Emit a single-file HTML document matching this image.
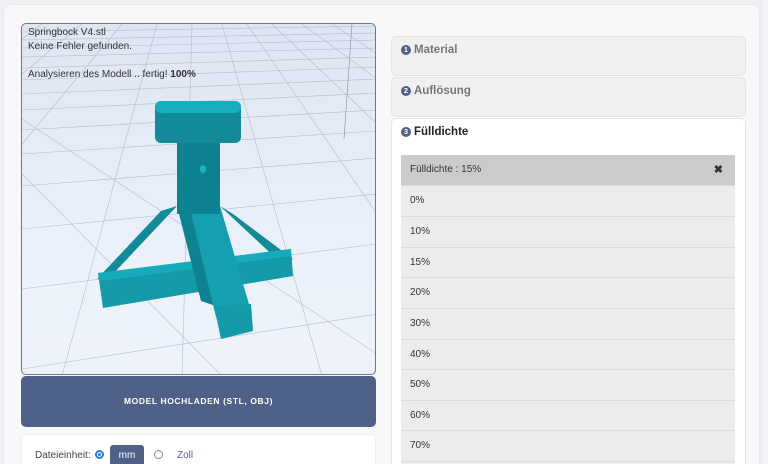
<!DOCTYPE html>
<html style="width:768px;height:464px;overflow:hidden"><head><meta charset="utf-8"><style>
*{box-sizing:border-box;margin:0;padding:0}
body{width:768px;height:464px;overflow:hidden;background:#eef0f3;font-family:"Liberation Sans",sans-serif;position:relative}
.card{position:absolute;left:3px;top:4px;width:757px;height:460px;background:#f7f8fa;border-radius:8px 8px 0 0;border:1px solid #e6e8ec;border-bottom:none}
.strip{position:absolute;left:761px;top:0;width:7px;height:464px;background:#f3f5f8;border-left:1px solid #e3e6ea}
.viewer{position:absolute;left:21px;top:23px;width:355px;height:352px;border:1px solid #777;border-radius:5px;overflow:hidden;background:linear-gradient(180deg,#dfe6f3,#eaf0fa 60%,#eef3fb)}
.vt{position:absolute;left:6px;font-size:10px;color:#333}
.btn{position:absolute;left:21px;top:376px;width:355px;height:51px;background:#4f6089;border-radius:5px;color:#fff;font-size:8.5px;font-weight:bold;letter-spacing:.6px;text-align:center;line-height:51px}
.opt{position:absolute;left:21px;top:434px;width:355px;height:30px;background:#fff;border-radius:5px 5px 0 0;border:1px solid #eceef1;border-bottom:none}
.acc{position:absolute;left:391px;width:355px;border:1px solid #e4e4e4;border-radius:5px;background:#f0f0f0}
.acc h3{position:absolute;left:9px;top:7px;font-size:11.5px;font-weight:bold;color:#777;display:flex;align-items:center}
.num{display:inline-block;width:10px;height:10px;border-radius:50%;background:#4f6089;color:#fff;font-size:7.5px;line-height:10px;text-align:center;margin-right:3px}
.row{position:absolute;left:401px;width:334px;height:31px;background:#ececec;border-top:1px solid #dcdcdc;font-size:10px;color:#333;padding-left:9px;line-height:30px}
</style></head><body>
<div class="card"></div>
<div class="strip"></div>
<div class="viewer">
<svg width="355" height="352" style="position:absolute;left:0;top:0" stroke="#b4bdcc" stroke-width="0.6" fill="none">
<line x1="0" y1="8" x2="355" y2="2"/><line x1="0" y1="16" x2="355" y2="9"/><line x1="0" y1="24" x2="355" y2="16"/><line x1="0" y1="33" x2="355" y2="24"/><line x1="0" y1="44" x2="355" y2="33"/><line x1="0" y1="56" x2="355" y2="43"/><line x1="0" y1="70" x2="355" y2="55"/><line x1="0" y1="86" x2="355" y2="69"/><line x1="0" y1="106" x2="355" y2="86"/><line x1="0" y1="130" x2="355" y2="107"/><line x1="0" y1="162" x2="355" y2="134"/><line x1="0" y1="205" x2="355" y2="170"/><line x1="0" y1="265" x2="355" y2="220"/><line x1="0" y1="345" x2="355" y2="290"/>
<line x1="20" y1="0" x2="0" y2="15"/><line x1="60" y1="0" x2="0" y2="50"/><line x1="100" y1="0" x2="0" y2="120"/><line x1="135" y1="0" x2="40" y2="352"/><line x1="170" y1="0" x2="160" y2="352"/><line x1="200" y1="0" x2="300" y2="352"/><line x1="225" y1="0" x2="355" y2="190"/><line x1="250" y1="0" x2="355" y2="100"/><line x1="280" y1="0" x2="355" y2="55"/><line x1="310" y1="0" x2="355" y2="30"/>
<line x1="0" y1="150" x2="200" y2="352"/><line x1="0" y1="95" x2="355" y2="330"/>
<line x1="330" y1="0" x2="322" y2="115" stroke="#8892a4"/>
</svg>
<svg width="355" height="352" style="position:absolute;left:-21px;top:-23px;overflow:visible">
<polygon points="160,210 176,205 110,275 96,278" fill="#128a98"/>
<polygon points="219,205 232,213 292,258 280,262" fill="#128a98"/>
<polygon points="97,272 290,248 292,275 102,307" fill="#1399a8"/>
<polygon points="97,272 290,248 290,255 100,280" fill="#17aabb"/>
<polygon points="176,205 192,212 215,305 200,300" fill="#0f8291"/>
<polygon points="190,212 219,205 250,310 215,316" fill="#14a0b0"/>
<polygon points="213,305 250,303 252,330 220,338" fill="#1399a8"/>
<rect x="176" y="135" width="43" height="78" fill="#0f8291"/>
<rect x="154" y="100" width="86" height="42" rx="6" fill="#128a98"/>
<rect x="154" y="100" width="86" height="12" rx="6" fill="#17aebf"/>
<ellipse cx="202" cy="168" rx="3" ry="4" fill="#19b3c4"/>
</svg>
<div class="vt" style="top:3px">Springbock V4.stl</div>
<div class="vt" style="top:17px">Keine Fehler gefunden.</div>
<div class="vt" style="top:45px">Analysieren des Modell .. fertig! <b>100%</b></div>
</div>
<div class="btn">MODEL HOCHLADEN (STL, OBJ)</div>
<div class="opt">
<span style="position:absolute;left:13px;top:15px;font-size:10px;color:#444">Dateieinheit:</span>
<span style="position:absolute;left:73px;top:15px;width:9px;height:9px;border-radius:50%;border:2px solid #2a7de1;background:#fff"><span style="position:absolute;left:1px;top:1px;width:3px;height:3px;border-radius:50%;background:#2a7de1"></span></span>
<span style="position:absolute;left:88px;top:10px;width:34px;height:22px;background:#4f6089;border-radius:3px;color:#fff;font-size:10px;text-align:center;line-height:22px">mm</span>
<span style="position:absolute;left:132px;top:15px;width:9px;height:9px;border-radius:50%;border:1px solid #888"></span>
<span style="position:absolute;left:155px;top:15px;font-size:10px;color:#4f6089">Zoll</span>
</div>
<div class="acc" style="top:36px;height:40px"><h3><span class="num">1</span>Material</h3></div>
<div class="acc" style="top:77px;height:40px"><h3><span class="num">2</span>Auflösung</h3></div>
<div class="acc" style="top:118px;height:346px;background:#fff;border-bottom:none;border-radius:5px 5px 0 0"><h3 style="color:#222"><span class="num">3</span>Fülldichte</h3></div>
<div class="row" style="top:155px;background:#cbcbcb;border:none">Fülldichte : 15%<span style="position:absolute;right:12px;font-weight:bold;font-size:11px">✖</span></div>
<div class="row" style="top:185px">0%</div>
<div class="row" style="top:216px">10%</div>
<div class="row" style="top:247px">15%</div>
<div class="row" style="top:277px">20%</div>
<div class="row" style="top:308px">30%</div>
<div class="row" style="top:339px">40%</div>
<div class="row" style="top:369px">50%</div>
<div class="row" style="top:400px">60%</div>
<div class="row" style="top:430px">70%</div>
<div class="row" style="top:461px;height:3px"></div>
</body></html>
